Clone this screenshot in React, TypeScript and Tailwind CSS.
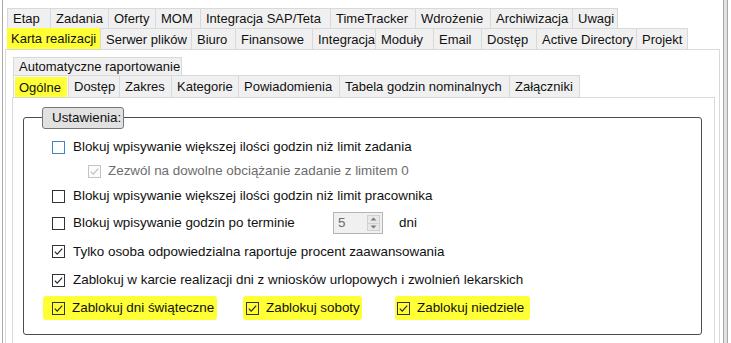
const YELLOW = "bg-[#ffff36]";

const ROW1 = [
  { label: "Etap", w: 43 },
  { label: "Zadania", w: 58 },
  { label: "Oferty", w: 47 },
  { label: "MOM", w: 45 },
  { label: "Integracja SAP/Teta", w: 130 },
  { label: "TimeTracker", w: 85 },
  { label: "Wdrożenie", w: 75 },
  { label: "Archiwizacja", w: 82 },
  { label: "Uwagi", w: 46 },
];

const ROW2 = [
  { label: "Karta realizacji", w: 93, active: true },
  { label: "Serwer plików", w: 91 },
  { label: "Biuro", w: 44 },
  { label: "Finansowe", w: 77 },
  { label: "Integracja", w: 63 },
  { label: "Moduły", w: 58 },
  { label: "Email", w: 48 },
  { label: "Dostęp", w: 55 },
  { label: "Active Directory", w: 100 },
  { label: "Projekt", w: 52 },
];

const INNER = [
  { label: "Ogólne", w: 55, active: true },
  { label: "Dostęp", w: 51 },
  { label: "Zakres", w: 52 },
  { label: "Kategorie", w: 67 },
  { label: "Powiadomienia", w: 101 },
  { label: "Tabela godzin nominalnych", w: 170 },
  { label: "Załączniki", w: 71 },
];

export default function App() {
  return (
    <div className="h-[343px] w-[731px] overflow-hidden bg-white font-['Liberation_Sans',Arial,sans-serif] text-[13px] leading-none text-[#111]">
      <div className="flex h-full">
        <div className="w-[2px]" />
        <div className="w-px bg-[#a9a9a9]" />
        <div className="w-[2px]" />

        <main className="flex w-[715px] flex-col pt-[8px]">
          <TabRow tabs={ROW1} height="h-[20px]" />
          <TabRow tabs={ROW2} height="h-[21px]" />

          {/* outer tab page */}
          <div className="h-[300px] shrink-0 border border-[#d9d9d9] bg-white pt-[7px]">
            <div className="ml-[6px] flex w-[703px] flex-col">
              <div className="flex h-[18px] shrink-0 pl-px">
                <Tab label="Automatyczne raportowanie" w={169} last />
              </div>
              <div className="flex h-[22px] shrink-0 pl-px">
                {INNER.map((t, i) => (
                  <Tab key={t.label} label={t.label} w={t.w} active={t.active} inset last={i === INNER.length - 1} />
                ))}
              </div>

              {/* inner tab page */}
              <div className="h-[260px] shrink-0 border border-[#d9d9d9] bg-white pl-[10px] pt-[19px]">
                <SettingsGroup />
              </div>
            </div>
          </div>
        </main>

        <div className="w-[3px]" />
        <div className="w-[5px] border-x border-[#a6a6a6] bg-[#e3e3e3]" />
        <div className="flex-1" />
      </div>
    </div>
  );
}

function TabRow({ tabs, height }: { tabs: { label: string; w: number; active?: boolean }[]; height: string }) {
  return (
    <div className={`flex shrink-0 pl-[2px] ${height}`}>
      {tabs.map((t, i) => (
        <Tab key={t.label} label={t.label} w={t.w} active={t.active} last={i === tabs.length - 1} />
      ))}
    </div>
  );
}

function Tab({ label, w, active = false, inset = false, last = false }: {
  label: string; w: number; active?: boolean; inset?: boolean; last?: boolean;
}) {
  // highlighted (selected) tabs: whole tab in marker yellow, inner tabs slightly inset
  if (active && !inset) {
    return (
      <div style={{ width: w }} className={`flex h-full shrink-0 items-center whitespace-nowrap pl-[4px] ${YELLOW}`}>
        {label}
      </div>
    );
  }
  return (
    <div
      style={{ width: w }}
      className={`flex h-full shrink-0 border-l border-t border-[#d9d9d9] ${last ? "border-r" : ""} ${
        active ? "bg-white px-px pt-px" : "bg-[#f0f0f0]"
      }`}
    >
      {active ? (
        <div className={`flex w-full items-center whitespace-nowrap pl-[4px] ${YELLOW}`}>{label}</div>
      ) : (
        <div className="flex w-full items-center whitespace-nowrap pl-[5px]">{label}</div>
      )}
    </div>
  );
}

function SettingsGroup() {
  return (
    <div className="relative h-[218px] w-[679px] rounded-[3px] border border-[#4d4d4d] pt-[17px] text-[13.4px]">
      <div className="absolute left-[18px] top-[-11px] flex h-[22px] w-[82px] items-center rounded-[3px] border border-[#767676] bg-[#e1e1e1] pl-[9px]">
        Ustawienia:
      </div>

      <Row h="h-[24px]">
        <Box focus />
        <span>Blokuj wpisywanie większej ilości godzin niż limit zadania</span>
      </Row>
      <Row h="h-[24px]">
        <div className="ml-[28px]" />
        <Box checked disabled />
        <span className="-ml-px text-[#6d6d6d]">Zezwól na dowolne obciążanie zadanie z limitem 0</span>
      </Row>
      <Row h="h-[26px]">
        <Box />
        <span>Blokuj wpisywanie większej ilości godzin niż limit pracownika</span>
      </Row>
      <Row h="h-[28px]">
        <Box />
        <span className="w-[252px]">Blokuj wpisywanie godzin po terminie</span>
        <Spin value="5" />
        <span className="ml-[8px]">dni</span>
      </Row>
      <Row h="h-[29px]">
        <Box checked />
        <span>Tylko osoba odpowiedzialna raportuje procent zaawansowania</span>
      </Row>
      <Row h="h-[28px]">
        <Box checked />
        <span>Zablokuj w karcie realizacji dni z wniosków urlopowych i zwolnień lekarskich</span>
      </Row>

      <div className="flex h-[28px] items-center pl-[19px]">
        <Marked w={174} pl="pl-[9px]" label="Zablokuj dni świąteczne" />
        <div className="w-[26px]" />
        <Marked w={119} pl="pl-[3px]" label="Zablokuj soboty" />
        <div className="w-[33px]" />
        <Marked w={135} pl="pl-[2px]" label="Zablokuj niedziele" />
      </div>
    </div>
  );
}

function Row({ h, children }: { h: string; children: React.ReactNode }) {
  return <div className={`flex items-center gap-[8px] pl-[28px] ${h}`}>{children}</div>;
}

function Marked({ w, pl, label }: { w: number; pl: string; label: string }) {
  return (
    <div style={{ width: w }} className={`flex h-[24px] items-center gap-[7px] whitespace-nowrap rounded-[3px] ${pl} ${YELLOW}`}>
      <Box checked />
      <span>{label}</span>
    </div>
  );
}

function Box({ checked = false, disabled = false, focus = false }: { checked?: boolean; disabled?: boolean; focus?: boolean }) {
  const stroke = disabled ? "#c4c4c4" : focus ? "#3d84c6" : "#333333";
  return (
    <svg width="13" height="13" viewBox="0 0 13 13" className="shrink-0">
      <rect x="0.5" y="0.5" width="12" height="12" fill={disabled ? "#fbfbfb" : "transparent"} stroke={stroke} />
      {checked && (
        <polyline
          points="2.8,6.6 5.2,9.2 10.2,3.6"
          fill="none"
          stroke={disabled ? "#bdbdbd" : "#222"}
          strokeWidth="1.1"
        />
      )}
    </svg>
  );
}

function Spin({ value }: { value: string }) {
  return (
    <div className="flex h-[22px] w-[50px] items-stretch border border-[#b5b5b5] bg-[#f0f0f0]">
      <span className="flex flex-1 items-center pl-[4px] text-[#6d6d6d]">{value}</span>
      <div className="my-[2px] mr-[2px] flex w-[13px] flex-col border border-[#d0d0d0] bg-[#e8e8e8]">
        <div className="flex flex-1 items-center justify-center">
          <svg width="7" height="4" viewBox="0 0 7 4"><path d="M0.5 3.5 L3.5 0.5 L6.5 3.5Z" fill="#7a7a7a" /></svg>
        </div>
        <div className="flex flex-1 items-center justify-center border-t border-[#d0d0d0]">
          <svg width="7" height="4" viewBox="0 0 7 4"><path d="M0.5 0.5 L3.5 3.5 L6.5 0.5Z" fill="#7a7a7a" /></svg>
        </div>
      </div>
    </div>
  );
}
